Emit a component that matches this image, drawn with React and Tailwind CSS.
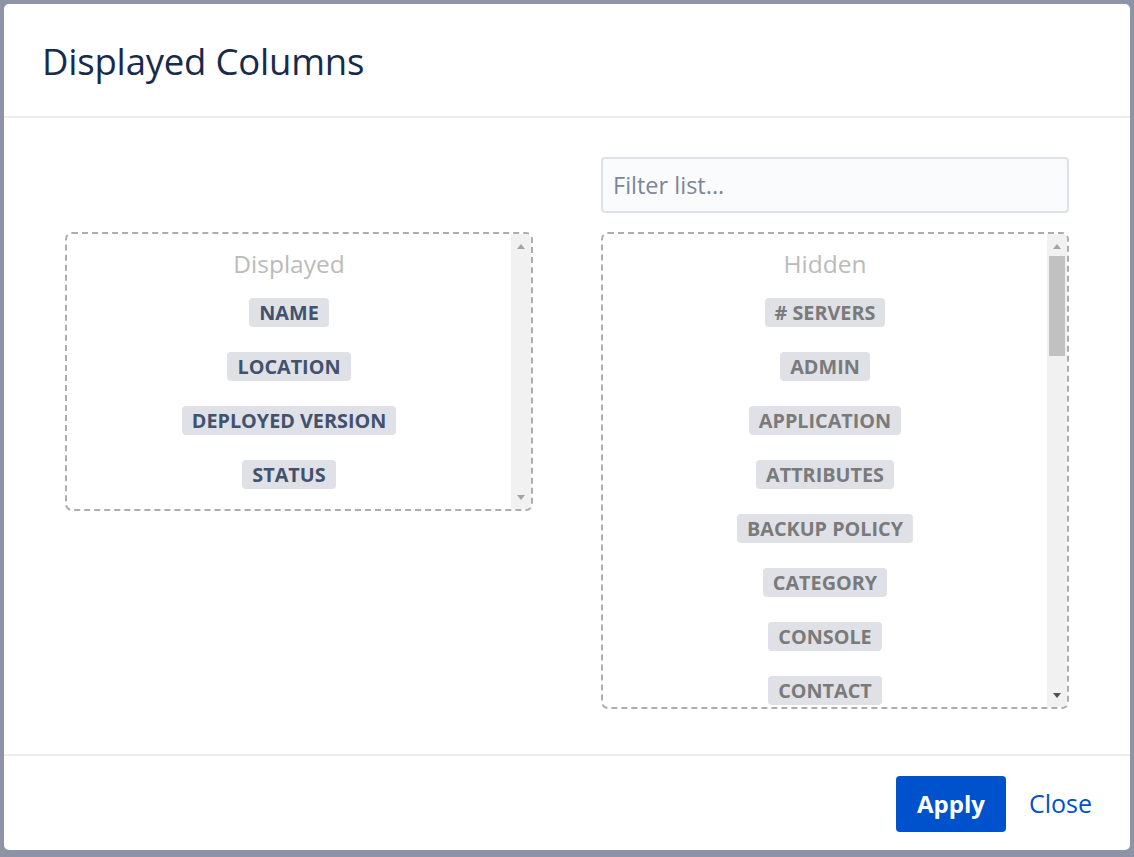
import React from 'react';

const displayed = ['NAME', 'LOCATION', 'DEPLOYED VERSION', 'STATUS'];

const hidden = [
  '# SERVERS',
  'ADMIN',
  'APPLICATION',
  'ATTRIBUTES',
  'BACKUP POLICY',
  'CATEGORY',
  'CONSOLE',
  'CONTACT',
  'CPU',
  'CREATED',
  'DESCRIPTION',
  'ENVIRONMENT',
  'HOSTNAME',
  'IP ADDRESS',
  'LAST UPDATED',
  'MEMORY',
  'NOTES',
  'OPERATING SYSTEM',
  'OWNER',
  'PLATFORM',
];

function Arrow({ up, dark }) {
  return (
    <svg width="8" height="5" viewBox="0 0 8 5" className="block">
      <path d={up ? 'M0 5 L4 0 L8 5 Z' : 'M0 0 L4 5 L8 0 Z'} fill={dark ? '#505050' : '#a3a3a3'} />
    </svg>
  );
}

function Scrollbar({ thumb }) {
  return (
    <div className="w-[20px] bg-[#f1f1f1] flex flex-col items-center shrink-0">
      <div className="h-[22px] flex items-center justify-center pt-[2px]">
        <Arrow up />
      </div>
      <div className="flex-1 w-full px-[2px]">
        {thumb && <div className="h-[100px] w-full bg-[#c1c1c1]" />}
      </div>
      <div className="h-[22px] flex items-center justify-center pb-[2px]">
        <Arrow dark={thumb} />
      </div>
    </div>
  );
}

function ColumnBox({ title, items, height, muted, thumb }) {
  return (
    <div
      className={`${height} border-2 border-dashed border-[#adadad] rounded-[7px] flex overflow-hidden`}
    >
      <div className="flex-1 flex flex-col items-center pt-[14px] overflow-hidden">
        <div className="h-[32px] leading-[32px] text-[24.5px] text-[#bbbbbb]">{title}</div>
        <div className="mt-[18px] flex flex-col items-center gap-[25px]">
          {items.map((item) => (
            <span
              key={item}
              className={`h-[29px] leading-[29px] px-[10px] rounded-[4px] bg-[#dfe1e6] text-[19.8px] font-bold whitespace-nowrap ${
                muted ? 'text-[#7a7a7a]' : 'text-[#42526e]'
              }`}
            >
              {item}
            </span>
          ))}
        </div>
      </div>
      <Scrollbar thumb={thumb} />
    </div>
  );
}

export default function App() {
  return (
    <div className="min-h-screen bg-[#8c94a5] p-[4px] font-['Open_Sans','Noto_Sans',sans-serif]">
      <div className="h-[846px] bg-white rounded-[5px] flex flex-col">
        <div className="h-[114px] flex items-center px-[38px] border-b-2 border-[#ebecf0] shrink-0">
          <h1 className="text-[36.5px] font-medium text-[#172b4d] tracking-[-0.2px] pt-[2px]">Displayed Columns</h1>
        </div>

        <div className="flex-1 border-b-2 border-[#ebecf0] px-[61px] pt-[39px] grid grid-cols-2 gap-[68px] items-start">
          <div className="flex flex-col">
            <div className="h-[75px]" />
            <ColumnBox title="Displayed" items={displayed} height="h-[279px]" />
          </div>
          <div className="flex flex-col gap-[19px]">
            <input
              type="text"
              placeholder="Filter list..."
              className="h-[56px] w-full border-2 border-[#dfe1e6] bg-[#fafbfc] rounded-[4px] px-[10px] text-[23.5px] text-[#172b4d] placeholder:text-[#7a869a] outline-none"
            />
            <ColumnBox title="Hidden" items={hidden} height="h-[477px]" muted thumb />
          </div>
        </div>

        <div className="h-[94px] shrink-0 flex items-start justify-end gap-[23px] pt-[20px] pr-[38px]">
          <button className="h-[56px] w-[110px] rounded-[4px] bg-[#0052cc] text-white text-[24px] font-bold">
            Apply
          </button>
          <button className="h-[56px] text-[25px] text-[#0052cc]">Close</button>
        </div>
      </div>
    </div>
  );
}
